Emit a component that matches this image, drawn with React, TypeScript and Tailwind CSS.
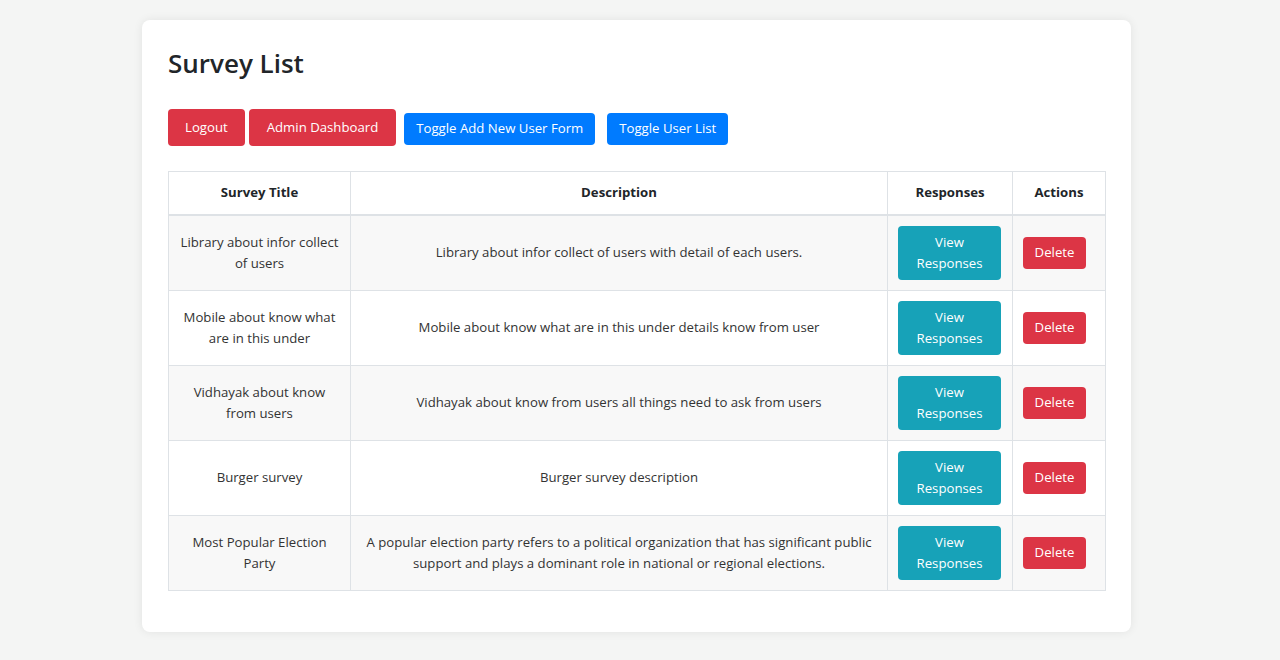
import React from "react";

const rows = [
  {
    title: "Library about infor collect of users",
    desc: "Library about infor collect of users with detail of each users.",
  },
  {
    title: "Mobile about know what are in this under",
    desc: "Mobile about know what are in this under details know from user",
  },
  {
    title: "Vidhayak about know from users",
    desc: "Vidhayak about know from users all things need to ask from users",
  },
  { title: "Burger survey", desc: "Burger survey description" },
  {
    title: "Most Popular Election Party",
    desc: "A popular election party refers to a political organization that has significant public support and plays a dominant role in national or regional elections.",
  },
];

export default function App() {
  return (
    <div
      className="min-h-[660px] w-full bg-[#f4f5f4] pt-[20px] text-[#212529]"
      style={{ fontFamily: '"Open Sans", "Noto Sans", sans-serif' }}
    >
      <div className="ml-[142px] w-[989px] rounded-[8px] bg-white px-[26px] pt-[26px] pb-[41px] shadow-[0_0_10px_rgba(0,0,0,0.08)]">
        <h2 className="text-[26px] font-semibold leading-[34px] text-[#212529]">Survey List</h2>
        <div className="mt-[29px] flex items-start text-[13.2px]">
          <button className="h-[37px] rounded-[4px] bg-[#dc3545] px-[17px] text-white">
            Logout
          </button>
          <button className="ml-[4px] h-[37px] rounded-[4px] bg-[#dc3545] px-[18px] text-white">
            Admin Dashboard
          </button>
          <button className="ml-[8px] mt-[4px] h-[32px] rounded-[4px] bg-[#007bff] px-[12px] text-white">
            Toggle Add New User Form
          </button>
          <button className="ml-[12px] mt-[4px] h-[32px] rounded-[4px] bg-[#007bff] px-[12px] text-white">
            Toggle User List
          </button>
        </div>
        <table className="mt-[25px] w-[937px] table-fixed border-collapse text-[13.2px] leading-[21px]">
          <colgroup>
            <col className="w-[182px]" />
            <col className="w-[537px]" />
            <col className="w-[125px]" />
            <col className="w-[93px]" />
          </colgroup>
          <thead>
            <tr className="h-[43px]">
              <th className="border border-b-2 border-[#dee2e6] px-[11px] text-center font-bold">Survey Title</th>
              <th className="border border-b-2 border-[#dee2e6] px-[11px] text-center font-bold">Description</th>
              <th className="border border-b-2 border-[#dee2e6] px-[11px] text-center font-bold">Responses</th>
              <th className="border border-b-2 border-[#dee2e6] px-[11px] text-center font-bold">Actions</th>
            </tr>
          </thead>
          <tbody>
            {rows.map((r, i) => (
              <tr key={i} className={i % 2 === 0 ? "bg-[#f8f8f8]" : "bg-white"}>
                <td className="border border-[#dee2e6] px-[11px] py-[10px] text-center text-[#333]">{r.title}</td>
                <td className="border border-[#dee2e6] px-[11px] py-[10px] text-center text-[#333]">{r.desc}</td>
                <td className="border border-[#dee2e6] py-[10px] pl-[10px] pr-[11px] text-left">
                  <button className="h-[54px] w-[103px] rounded-[4px] bg-[#17a2b8] px-[12px] leading-[21px] text-white">
                    View Responses
                  </button>
                </td>
                <td className="border border-[#dee2e6] py-[10px] pl-[10px] pr-[9px] text-left">
                  <button className="h-[32px] w-[63px] rounded-[4px] bg-[#dc3545] text-white">
                    Delete
                  </button>
                </td>
              </tr>
            ))}
          </tbody>
        </table>
      </div>
    </div>
  );
}
